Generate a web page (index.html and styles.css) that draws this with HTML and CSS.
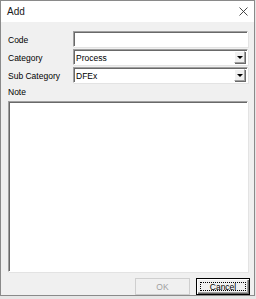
FILE: index.html
```html
<!DOCTYPE html>
<html lang="en">
<head>
    <meta charset="UTF-8">
    <title>Add</title>
    <link rel="stylesheet" href="styles.css">
</head>
<body>
    <div class="window">
        <div class="titlebar">
            <span class="title">Add</span>
            <svg class="close" width="9" height="9" viewBox="0 0 9 9">
                <path d="M0.5 0.5 L8.5 8.5 M8.5 0.5 L0.5 8.5" stroke="#333" stroke-width="0.9" fill="none"/>
            </svg>
        </div>

        <div class="content">
            <div class="fields">
                <div class="field">
                    <span class="label">Code</span>
                    <div class="input"></div>
                </div>
                <div class="field">
                    <span class="label">Category</span>
                    <div class="input select">
                        <span class="value">Process</span>
                        <span class="drop"><span class="arrow"></span></span>
                    </div>
                </div>
                <div class="field">
                    <span class="label">Sub Category</span>
                    <div class="input select">
                        <span class="value">DFEx</span>
                        <span class="drop"><span class="arrow"></span></span>
                    </div>
                </div>
            </div>

            <div class="note-label">Note</div>
            <div class="note"></div>

            <div class="buttons">
                <button class="btn disabled">OK</button>
                <button class="btn default"><span class="focus">Cancel</span></button>
            </div>
        </div>
    </div>
</body>
</html>
```

FILE: styles.css
```css
* {
    margin: 0;
    padding: 0;
    box-sizing: border-box;
}

body {
    font-family: "Liberation Sans", Arial, sans-serif;
    font-size: 8.5px;
    color: #000;
    background: #e6e6e6;
    width: 256px;
    height: 299px;
    overflow: hidden;
}

.window {
    width: 255px;
    height: 296px;
    border: 1px solid #8a8a8a;
    background: #f0f0f0;
    display: flex;
    flex-direction: column;
}

.titlebar {
    height: 21px;
    background: #fff;
    display: flex;
    align-items: center;
    justify-content: space-between;
    padding: 0 6px 0 6px;
}

.title {
    font-size: 10px;
    color: #1a1a1a;
}

.close {
    display: block;
}

.content {
    flex: 1;
    padding: 9px 6px 0 7px;
    display: flex;
    flex-direction: column;
}

.fields {
    display: flex;
    flex-direction: column;
    gap: 2px;
}

.field {
    display: flex;
    align-items: center;
}

.label {
    width: 65px;
    flex-shrink: 0;
    padding-top: 1px;
}

.input {
    flex: 1;
    height: 16px;
    background: #fff;
    border: 1px solid;
    border-color: #a0a0a0 #fff #fff #a0a0a0;
    box-shadow: inset 1px 1px 0 #696969, 1px 1px 0 #e3e3e3;
}

.select {
    display: flex;
    align-items: center;
    padding: 1px 1px 1px 2px;
}

.value {
    flex: 1;
    padding-top: 1px;
}

.drop {
    width: 11px;
    height: 12px;
    background: #f0f0f0;
    border: 1px solid;
    border-color: #fff #a0a0a0 #a0a0a0 #fff;
    box-shadow: 1px 1px 0 #696969;
    display: flex;
    align-items: center;
    justify-content: center;
    margin-right: 1px;
}

.arrow {
    width: 0;
    height: 0;
    border-left: 3px solid transparent;
    border-right: 3px solid transparent;
    border-top: 3px solid #000;
    margin-top: 1px;
}

.note-label {
    margin-top: 4px;
    height: 10px;
    line-height: 10px;
}

.note {
    margin-top: 4px;
    height: 171px;
    background: #fff;
    border: 1px solid;
    border-color: #a0a0a0 #fff #fff #a0a0a0;
    box-shadow: inset 1px 1px 0 #696969, 1px 1px 0 #e3e3e3;
}

.buttons {
    margin-top: 6px;
    margin-right: -2px;
    display: flex;
    justify-content: flex-end;
    gap: 6px;
}

.btn {
    font-family: "Liberation Sans", Arial, sans-serif;
    font-size: 8.5px;
    height: 17px;
    background: #f0f0f0;
    display: flex;
    align-items: stretch;
    justify-content: center;
}

.btn.disabled {
    width: 55px;
    color: #a0a0a0;
    border: 1px solid #cfcfcf;
    align-items: center;
}

.btn.default {
    width: 54px;
    color: #000;
    padding: 3px;
    border: 1px solid #000;
    box-shadow: inset 1px 1px 0 #fff, inset -1px -1px 0 #696969, inset -2px -2px 0 #a0a0a0;
}

.focus {
    flex: 1;
    outline: 1px dotted #000;
    outline-offset: -1px;
    display: flex;
    align-items: center;
    justify-content: center;
}
```
